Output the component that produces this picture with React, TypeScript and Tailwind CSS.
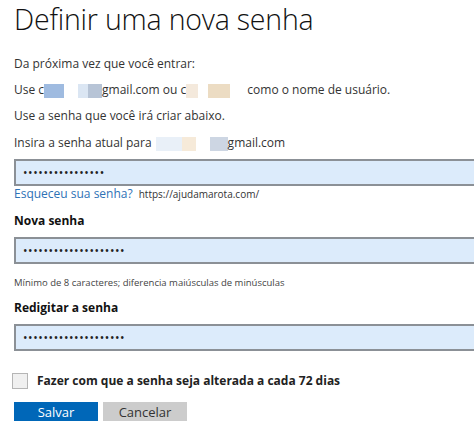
import { useState } from 'react';

function Blur({ className }: { className: string }) {
  return <span className={`inline-block h-[14px] align-middle ${className}`} />;
}

function PasswordField({ dots }: { dots: number }) {
  return (
    <div className="flex h-[27px] w-[470px] items-center border-2 border-[#8b9096] bg-[#dcebfb] pl-[7px]">
      <span className="text-[12px] leading-none tracking-[0.6px] text-[#222]">{'•'.repeat(dots)}</span>
    </div>
  );
}

export default function App() {
  const [expire, setExpire] = useState(false);

  return (
    <div className="h-[421px] w-[474px] overflow-hidden bg-white pl-[14px] font-['Open_Sans',sans-serif] text-[#222]">
      <h1 className="h-[51px] pt-[1px] text-[28.5px] font-light leading-[36px] tracking-[-0.2px] text-[#111]">
        Definir uma nova senha
      </h1>

      <div className="text-[12px] leading-[26px] text-[#333]">
        <p>Da próxima vez que você entrar:</p>
        <p>
          Use c
          <Blur className="w-[20px] bg-[#9fbbe0]" />
          <Blur className="w-[14px] bg-white" />
          <Blur className="w-[10px] bg-[#dbe6f3]" />
          <Blur className="w-[14px] bg-[#b7c4d6]" />
          gmail.com ou c
          <Blur className="w-[12px] bg-[#f4e9dc]" />
          <Blur className="w-[10px] bg-white" />
          <Blur className="w-[22px] bg-[#ecdcc3]" />
          <Blur className="w-[14px] bg-white" /> como o nome de usuário.
        </p>
        <p>Use a senha que você irá criar abaixo.</p>
        <p className="leading-[27px]">
          Insira a senha atual para
          <Blur className="ml-[4px] w-[26px] bg-[#e9f0f8]" />
          <Blur className="w-[14px] bg-[#f6ead9]" />
          <Blur className="w-[14px] bg-white" />
          <Blur className="w-[18px] bg-[#cdd6e3]" />
          gmail.com
        </p>
      </div>

      <div className="mt-[3px]">
        <PasswordField dots={16} />
      </div>
      <div className="flex h-[16px] items-center gap-[6px]">
        <a className="text-[12px] text-[#2e72b6]">Esqueceu sua senha?</a>
        <span className="text-[10px] text-[#333]">https://ajudamarota.com/</span>
      </div>

      <p className="mt-[11px] h-[24px] text-[12px] font-bold leading-[16px] text-[#111]">Nova senha</p>
      <PasswordField dots={20} />

      <p className="mt-[12px] h-[18px] text-[9.5px] leading-[14px] text-[#444]">
        Mínimo de 8 caracteres; diferencia maiúsculas de minúsculas
      </p>

      <p className="mt-[6px] h-[24px] text-[12px] font-bold leading-[16px] text-[#111]">Redigitar a senha</p>
      <PasswordField dots={20} />

      <label className="mt-[21px] flex h-[17px] cursor-pointer items-center gap-[9px]">
        <span
          onClick={() => setExpire(!expire)}
          className="ml-[-2px] h-[16px] w-[16px] border border-[#b5b5b5] bg-[#f0f0f0]"
        />
        <span className="text-[12px] font-bold text-[#222]">Fazer com que a senha seja alterada a cada 72 dias</span>
      </label>

      <div className="mt-[13px] flex gap-[5px]">
        <button className="h-[21px] w-[84px] bg-[#0067b8] text-[13px] leading-[21px] text-white">Salvar</button>
        <button className="h-[21px] w-[84px] bg-[#cccccc] text-[13px] leading-[21px] text-[#333]">Cancelar</button>
      </div>
    </div>
  );
}
